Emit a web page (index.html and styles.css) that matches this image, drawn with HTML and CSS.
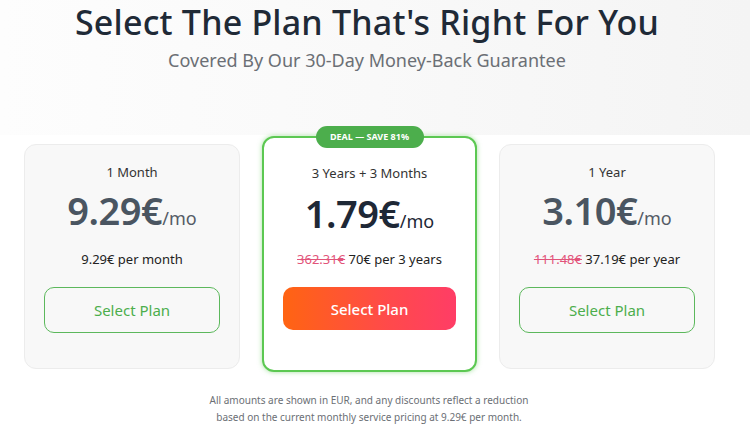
FILE: index.html
```html
<!DOCTYPE html>
<html lang="en">
<head>
<meta charset="utf-8">
<title>Plans</title>
<link rel="stylesheet" href="styles.css">
</head>
<body>
<header class="hero">
  <h1 class="title">Select The Plan That's Right For You</h1>
  <p class="subtitle">Covered By Our 30-Day Money-Back Guarantee</p>
</header>
<main class="plans">
  <div class="card">
    <div class="plan-name">1 Month</div>
    <div class="price"><span class="amount">9.29€</span><span class="per">/mo</span></div>
    <div class="billing">9.29€ per month</div>
    <button class="btn btn-outline">Select Plan</button>
  </div>
  <div class="card card-featured">
    <div class="badge">DEAL — SAVE 81%</div>
    <div class="plan-name">3 Years + 3 Months</div>
    <div class="price"><span class="amount">1.79€</span><span class="per">/mo</span></div>
    <div class="billing"><s class="old">362.31€</s> 70€ per 3 years</div>
    <button class="btn btn-primary">Select Plan</button>
  </div>
  <div class="card">
    <div class="plan-name">1 Year</div>
    <div class="price"><span class="amount">3.10€</span><span class="per">/mo</span></div>
    <div class="billing"><s class="old">111.48€</s> 37.19€ per year</div>
    <button class="btn btn-outline">Select Plan</button>
  </div>
</main>
<footer class="note">
  All amounts are shown in EUR, and any discounts reflect a reduction<br>
  based on the current monthly service pricing at 9.29€ per month.
</footer>
</body>
</html>
```
FILE: styles.css
```css
* { box-sizing: border-box; }
html, body { margin: 0; padding: 0; }
body {
  width: 750px;
  height: 425px;
  overflow: hidden;
  background: #ffffff;
  font-family: "Noto Sans", "Open Sans", sans-serif;
  color: #222;
}
.hero {
  height: 135px;
  padding: 2px 16px 0 0;
  text-align: center;
  background: linear-gradient(90deg, #fdfdfd 0%, #f9f9f9 50%, #f4f4f4 100%);
}
.title {
  margin: 0;
  font-size: 34px;
  line-height: 40px;
  font-weight: 500;
  letter-spacing: 0.2px;
  color: #1f2a37;
}
.subtitle {
  margin: 7px 0 0;
  font-size: 18px;
  line-height: 22px;
  color: #6b6f75;
}
.plans {
  display: flex;
  justify-content: center;
  align-items: flex-start;
  gap: 22px;
  padding-right: 11px;
  margin-top: 1px;
}
.card {
  position: relative;
  width: 216px;
  margin-top: 8px;
  padding: 18px 19px 35px;
  display: flex;
  flex-direction: column;
  align-items: stretch;
  text-align: center;
  background: #f8f8f8;
  border: 1px solid #ececec;
  border-radius: 12px;
}
.plan-name {
  font-size: 13px;
  line-height: 18px;
  color: #333;
}
.price {
  margin-top: 10px;
  height: 44px;
  display: flex;
  justify-content: center;
  align-items: baseline;
  padding-top: 0;
  color: #4a5561;
}
.amount {
  font-size: 38px;
  line-height: 38px;
  font-weight: 600;
  letter-spacing: -0.5px;
}
.per {
  font-size: 18px;
  line-height: 18px;
  color: #555c66;
}
.billing {
  margin-top: 15px;
  font-size: 13px;
  line-height: 18px;
  color: #222;
}
.old {
  color: #e2547a;
}
.btn {
  margin-top: 19px;
  height: 46px;
  border-radius: 10px;
  font-family: inherit;
  font-size: 15px;
  cursor: pointer;
}
.btn-outline {
  background: transparent;
  border: 1px solid #5cb85c;
  color: #4cae4c;
}
.card-featured {
  width: 215px;
  margin-top: 0;
  padding: 26px 19px 40px;
  background: #ffffff;
  border: 2px solid #5cc852;
  box-shadow: 0 0 5px rgba(92, 200, 82, 0.55);
}
.card-featured .price {
  margin-top: 12px;
  color: #1e2836;
}
.card-featured .per { color: #1e2836; }
.card-featured .billing { margin-top: 12px; }
.btn-primary {
  height: 43px;
  border: none;
  color: #fff;
  font-weight: 500;
  background: linear-gradient(90deg, #ff6412 0%, #ff4a4a 60%, #ff3d66 100%);
}
.badge {
  position: absolute;
  top: -12px;
  left: 50%;
  transform: translateX(-50%);
  width: 108px;
  height: 22px;
  line-height: 22px;
  border-radius: 11px;
  background: #4cae4c;
  color: #fff;
  font-size: 9px;
  font-weight: 700;
  white-space: nowrap;
}
.note {
  margin-top: 20px;
  padding-right: 12px;
  text-align: center;
  font-size: 10px;
  line-height: 17px;
  color: #6b6f75;
}
```
